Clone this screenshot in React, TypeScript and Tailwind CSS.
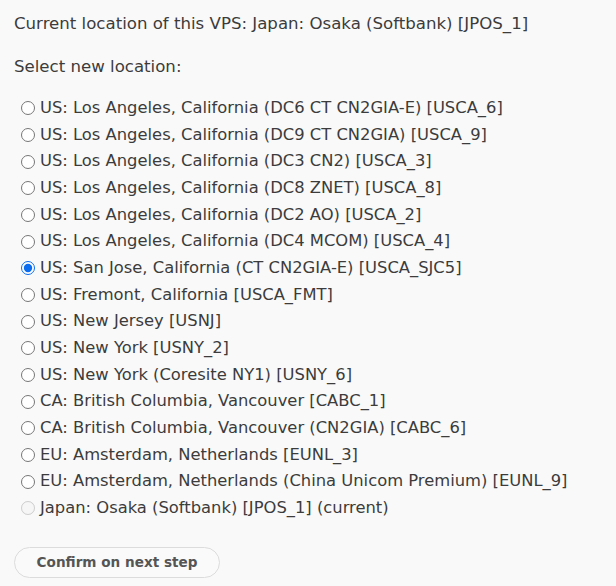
import React, { useState } from 'react'

const locations = [
  { id: 'USCA_6', label: 'US: Los Angeles, California (DC6 CT CN2GIA-E) [USCA_6]' },
  { id: 'USCA_9', label: 'US: Los Angeles, California (DC9 CT CN2GIA) [USCA_9]' },
  { id: 'USCA_3', label: 'US: Los Angeles, California (DC3 CN2) [USCA_3]' },
  { id: 'USCA_8', label: 'US: Los Angeles, California (DC8 ZNET) [USCA_8]' },
  { id: 'USCA_2', label: 'US: Los Angeles, California (DC2 AO) [USCA_2]' },
  { id: 'USCA_4', label: 'US: Los Angeles, California (DC4 MCOM) [USCA_4]' },
  { id: 'USCA_SJC5', label: 'US: San Jose, California (CT CN2GIA-E) [USCA_SJC5]' },
  { id: 'USCA_FMT', label: 'US: Fremont, California [USCA_FMT]' },
  { id: 'USNJ', label: 'US: New Jersey [USNJ]' },
  { id: 'USNY_2', label: 'US: New York [USNY_2]' },
  { id: 'USNY_6', label: 'US: New York (Coresite NY1) [USNY_6]' },
  { id: 'CABC_1', label: 'CA: British Columbia, Vancouver [CABC_1]' },
  { id: 'CABC_6', label: 'CA: British Columbia, Vancouver (CN2GIA) [CABC_6]' },
  { id: 'EUNL_3', label: 'EU: Amsterdam, Netherlands [EUNL_3]' },
  { id: 'EUNL_9', label: 'EU: Amsterdam, Netherlands (China Unicom Premium) [EUNL_9]' },
  { id: 'JPOS_1', label: 'Japan: Osaka (Softbank) [JPOS_1] (current)', disabled: true },
]

export default function App() {
  const [selected, setSelected] = useState('USCA_SJC5')

  return (
    <div className="min-h-screen bg-[#f9f9f9] px-[14px] pt-[11px] text-[16.6px] text-[#3c3c3c] font-['DejaVu_Sans',Verdana,sans-serif]">
      <p className="leading-[26px]">Current location of this VPS: Japan: Osaka (Softbank) [JPOS_1]</p>
      <p className="mt-[17px] leading-[26px]">Select new location:</p>

      <div className="mt-[15px] text-[16.35px]">
        {locations.map((loc) => (
          <label key={loc.id} className="flex items-center h-[26.67px]">
            <input
              type="radio"
              name="location"
              value={loc.id}
              checked={selected === loc.id}
              disabled={loc.disabled}
              onChange={() => setSelected(loc.id)}
              className="w-[14px] h-[14px] ml-[7px] mr-[5px] accent-[#0b6cf0]"
            />
            <span>{loc.label}</span>
          </label>
        ))}
      </div>

      <button className="mt-[25px] h-[31px] w-[206px] rounded-full border border-[#dcdcdc] bg-[#fafafa] text-[13.6px] font-bold text-[#555]">
        Confirm on next step
      </button>
    </div>
  )
}
